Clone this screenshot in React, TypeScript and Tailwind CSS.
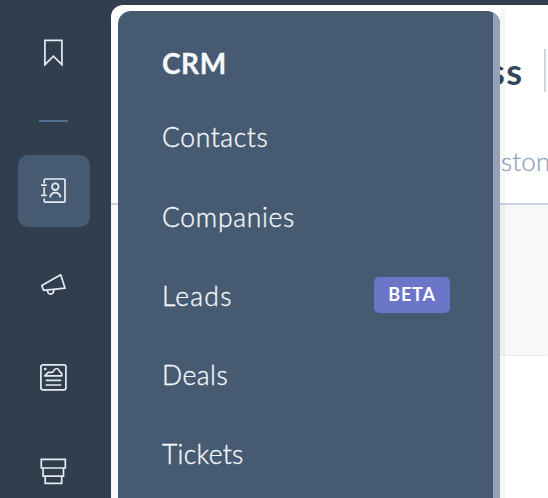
import type { ReactNode } from 'react';

interface MenuItem {
    label: string;
    tracking: string;
    badge?: string;
}

const menuItems: MenuItem[] = [
    { label: 'Contacts', tracking: 'tracking-[0.6px]' },
    { label: 'Companies', tracking: 'tracking-[0.7px]' },
    { label: 'Leads', tracking: 'tracking-[1.2px]', badge: 'BETA' },
    { label: 'Deals', tracking: 'tracking-[0.5px]' },
    { label: 'Tickets', tracking: 'tracking-[0.3px]' },
];

function Icon({ children }: { children: ReactNode }) {
    return (
        <svg width="30" height="30" viewBox="0 0 30 30" fill="none" stroke="#e6ebf3" strokeWidth="1.7" className="shrink-0">
            {children}
        </svg>
    );
}

function Sidebar() {
    return (
        <nav className="w-[111px] shrink-0 flex flex-col pl-[18px]">
            <div className="w-[72px] h-[37px] shrink-0 mt-[34px] flex items-center justify-center">
                <Icon>
                    <path d="M5.9 2.4h17v24.2l-8.5-8.5-8.5 8.5z" />
                </Icon>
            </div>
            <div className="w-[29px] h-[2px] shrink-0 mt-[49px] ml-[21px] bg-[#516f90]" />
            <div className="w-[72px] h-[72px] shrink-0 mt-[33px] rounded-[10px] bg-[#465a72] flex items-center justify-center">
                <Icon>
                    <path d="M5.2 7.4V4.2c0-.8.4-1.2 1.2-1.2h18.4c.8 0 1.2.4 1.2 1.2v20.8c0 .8-.4 1.2-1.2 1.2H6.4c-.8 0-1.2-.4-1.2-1.2v-2.6M5.2 11.2v7M2 9.2h5.8M2 19.4h5.8" />
                    <circle cx="16.3" cy="10.7" r="3.3" strokeWidth="1.8" />
                    <path d="M11.2 21.4c.3-3.1 2.2-4.7 5.1-4.7s4.8 1.6 5.1 4.7" strokeWidth="1.8" />
                </Icon>
            </div>
            <div className="w-[72px] h-[72px] shrink-0 mt-[22px] flex items-center justify-center">
                <Icon>
                    <path d="M2.8 15.6L21.7 4.8l4.4 13.4-21.5 2.1z" strokeLinejoin="round" />
                    <path d="M8.5 20.3c0 5.4 6.2 5 6.4-.5" />
                </Icon>
            </div>
            <div className="w-[72px] h-[72px] shrink-0 mt-[20px] flex items-center justify-center">
                <Icon>
                    <rect x="1.9" y="2.8" width="25" height="25" rx="2" />
                    <path d="M5.7 13.8l3.6-3.5h4c1.3 0 1.2-3.8 4.4-3.8 2.3 0 2.4 2.2 3 3.2 1.5.4 2.2 1.5 2.2 4.1z" strokeLinejoin="round" />
                    <path d="M6.7 18.3h15.5M6.7 23h15.5" />
                    <circle cx="6.2" cy="7" r="1.3" fill="#e6ebf3" stroke="none" />
                </Icon>
            </div>
            <div className="w-[72px] h-[72px] shrink-0 mt-[22px] flex items-center justify-center">
                <Icon>
                    <path d="M2.3 3.3h24v8.7h-24zM4.1 12h20.4v8.1H4.1zM6.2 20.1h16.5v7.3H6.2z" />
                </Icon>
            </div>
        </nav>
    );
}

function Page() {
    return (
        <main className="flex-1 mt-[5px] h-[493px] rounded-tl-[12px] bg-white overflow-hidden flex flex-col">
            <header className="h-[200px] shrink-0 border-b-2 border-[#cbd3e2]">
                <div className="h-[131px] flex items-center pl-[378px]">
                    <h1 className="w-[55px] shrink-0 font-['Lato'] font-bold text-[36px] leading-none text-[#33475b] tracking-[1.5px]">ss</h1>
                    <span className="w-[2px] shrink-0 h-[43px] bg-[#cbd6e2]" />
                </div>
                <p className="pl-[390px] mt-[12px] font-['Lato'] font-light text-[26px] leading-[26px] text-[#8fa3be] tracking-[0.2px] [-webkit-text-stroke:0.3px]">ston</p>
            </header>
            <section className="flex-1 pt-[151px] bg-[#f6f8fa]">
                <div className="h-full ml-[370px] bg-white shadow-[0_0_2px_rgba(0,0,0,0.12)]" />
            </section>
        </main>
    );
}

function CrmMenu() {
    return (
        <div className="absolute left-[118px] top-[11px] w-[382px] h-[487px] rounded-t-[13px] overflow-hidden flex bg-[#465a72]">
            <div className="flex-1 pl-[44px] pr-[43px] pt-[36px] text-[#f5f8fa]">
                <h2 className="h-[32px] font-['Lato'] font-bold text-[28px] leading-[32px] tracking-[0.6px] [-webkit-text-stroke:0.3px]">CRM</h2>
                <ul className="pt-[19.5px] font-['Lato'] font-light text-[26.5px] [-webkit-text-stroke:0.35px]">
                    {menuItems.map((item) => (
                        <li key={item.label} className="h-[79.25px] flex items-center justify-between">
                            <span className={item.tracking}>{item.label}</span>
                            {item.badge && (
                                <span className="w-[76px] h-[36px] -mt-[4px] rounded-[5px] bg-[#6b76c9] text-white font-bold text-[18px] tracking-[0.8px] [-webkit-text-stroke:0] flex items-center justify-center">
                                    {item.badge}
                                </span>
                            )}
                        </li>
                    ))}
                </ul>
            </div>
            <div className="w-[7px] shrink-0 bg-[#96a1b3]" />
        </div>
    );
}

export default function App() {
    return (
        <div className="relative w-[548px] h-[498px] overflow-hidden flex bg-[#313e4e]">
            <Sidebar />
            <Page />
            {/* soft edge next to the open menu */}
            <div className="absolute left-[500px] top-[10px] w-[5px] h-[488px] bg-black/[0.035]" />
            <CrmMenu />
        </div>
    );
}
